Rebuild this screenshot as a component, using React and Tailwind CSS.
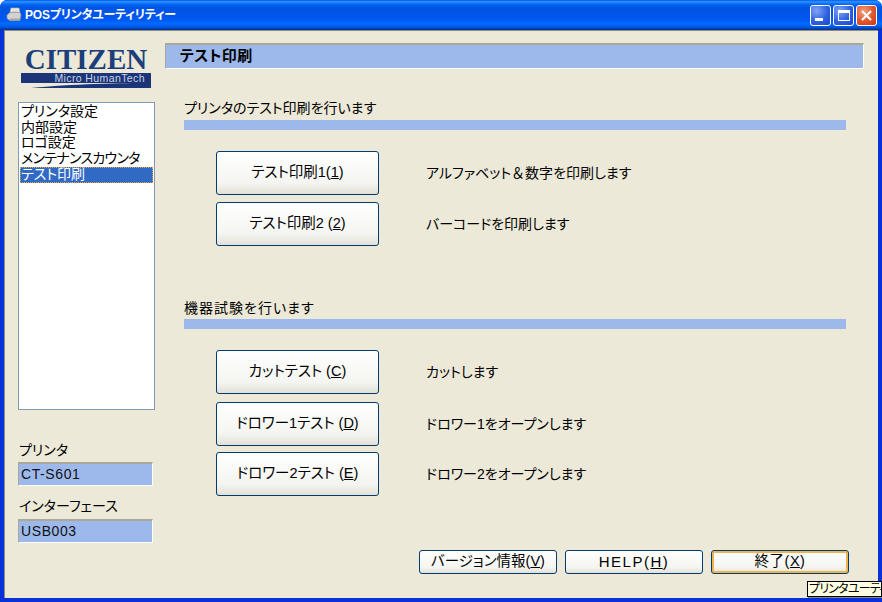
import React from 'react';

const FONT = "font-['Liberation_Sans','Noto_Sans_CJK_JP',sans-serif] [font-feature-settings:'palt']";

const menuItems = [
  { label: 'プリンタ設定', cls: '' },
  { label: '内部設定', cls: '' },
  { label: 'ロゴ設定', cls: '' },
  { label: 'メンテナンスカウンタ', cls: 'tracking-[-0.7px]' },
  { label: 'テスト印刷', cls: 'bg-[#316ac5] text-white outline-1 -outline-offset-1 outline-dotted outline-[#e8a33d]' },
];

const PrinterIcon = () => (
  <svg width="18" height="18" viewBox="0 0 18 18" className="shrink-0">
    <path d="M6 2h8l1 5H5z" fill="#f2f2f0" stroke="#a8a8a8" strokeWidth="0.7" />
    <path d="M2 9l3-2.5h10l1 2-1 6H5l-3-2z" fill="#d2d2d0" stroke="#8f8f8f" strokeWidth="0.7" />
    <path d="M5 12.5h10l-.4 2.3H5z" fill="#a5a5a5" />
    <path d="M7 4h6M7 5.4h6" stroke="#c4c4c4" strokeWidth="0.7" />
  </svg>
);

const CaptionButton = ({ close, children }) => (
  <div
    className={`w-[21px] h-[21px] rounded-[3px] border border-white flex items-center justify-center ${
      close
        ? 'bg-[radial-gradient(circle_at_35%_30%,#f0a080,#e2552b_55%,#c8380f)]'
        : 'bg-[radial-gradient(circle_at_30%_25%,#7fa4f5,#2f62e0_55%,#1c45cf)]'
    }`}
  >
    {children}
  </div>
);

const XpButton = ({ className = '', children }) => (
  <button
    className={`flex items-center justify-center rounded-[3px] border border-[#003c74] bg-[linear-gradient(180deg,#ffffff,#f4f4f0_75%,#e3e0d6)] text-[14.5px] text-black ${className}`}
  >
    {children}
  </button>
);

const TestRow = ({ label, desc, className = '' }) => (
  <div className={`flex items-center ${className}`}>
    <XpButton className="ml-[51px] w-[163px] h-[44px]">{label}</XpButton>
    <span className="ml-[47px] text-[14px] text-black">{desc}</span>
  </div>
);

const InfoField = ({ children }) => (
  <div className="w-[135px] h-[24px] flex items-center pl-[2px] bg-[#9db9eb] border-t-2 border-l border-t-[#aca899] border-l-[#aca899] border-b border-r border-b-white border-r-white text-[14px] tracking-[0.6px] text-[#111]">
    {children}
  </div>
);

const Logo = () => (
  <div className="ml-[3px] w-[130px] flex flex-col">
    <div className="h-[26px] flex items-center justify-center font-['Liberation_Serif',serif] font-bold text-[29px] leading-none text-[#1c3f7c]">
      CITIZEN
    </div>
    <div className="mt-[1px] h-[10px] bg-[#1c3578] flex items-center justify-end pr-[6px] text-[10.5px] leading-none tracking-[0.4px] text-[#c9d3e6]">
      Micro HumanTech
    </div>
    <svg width="130" height="5" viewBox="0 0 130 5" className="block">
      <path d="M10 5C50 1 100 0 130 0v5z" fill="#1c3578" />
    </svg>
  </div>
);

export default function App() {
  return (
    <div className={`${FONT} relative w-[882px] h-[602px] overflow-hidden flex flex-col bg-[#0831d9] rounded-t-[7px]`}>
      {/* タイトルバー */}
      <div className="h-[30px] shrink-0 flex items-center pl-[5px] pr-[5px] rounded-t-[7px] bg-[linear-gradient(180deg,#0058ee_0%,#3593ff_6%,#127dff_10%,#0262ee_16%,#0054e3_26%,#0055eb_56%,#005bf5_68%,#026afe_78%,#0062ef_86%,#0052d6_92%,#0040ab_96%,#003092_100%)]">
        <PrinterIcon />
        <span className="ml-[2px] text-[12px] font-bold tracking-[-0.2px] text-white">POSプリンタユーティリティー</span>
        <div className="ml-auto flex gap-[2px]">
          <CaptionButton>
            <div className="mt-[8px] mr-[3px] w-[8px] h-[3px] bg-white" />
          </CaptionButton>
          <CaptionButton>
            <div className="w-[12px] h-[11px] border border-white border-t-[3px]" />
          </CaptionButton>
          <CaptionButton close>
            <svg width="13" height="13" viewBox="0 0 13 13">
              <path d="M2 2l9 9M11 2l-9 9" stroke="#fff" strokeWidth="2.2" />
            </svg>
          </CaptionButton>
        </div>
      </div>

      {/* クライアント領域 */}
      <div className="flex-1 mx-[4px] mb-[4px] flex bg-[#ece9d8] border-t border-l border-[#8f8d80]">
        {/* 左カラム */}
        <div className="w-[160px] shrink-0 pl-[13px] pt-[15px] flex flex-col">
          <Logo />
          <ul className="mt-[14px] w-[137px] h-[308px] bg-white border border-[#7f9db9] pt-[1px] px-[1px] text-[14px] leading-[15.7px] text-black">
            {menuItems.map((item) => (
              <li key={item.label} className={`pl-[1px] whitespace-nowrap ${item.cls}`}>
                {item.label}
              </li>
            ))}
          </ul>
          <div className="mt-[31px] h-[21px] pb-[2px] pl-[1px] flex items-center text-[14px]">プリンタ</div>
          <InfoField>CT-S601</InfoField>
          <div className="mt-[12px] h-[21px] pb-[4px] pl-[1px] flex items-center text-[14px]">インターフェース</div>
          <InfoField>USB003</InfoField>
        </div>

        {/* 右カラム */}
        <div className="flex-1 pt-[12px] flex flex-col">
          <div className="w-[699px] h-[26px] flex items-center pl-[14px] bg-[#9db9eb] border-t-2 border-l border-t-[#aca899] border-l-[#aca899] border-b border-r border-b-white border-r-white text-[15px] font-bold tracking-[0.4px] text-black">
            テスト印刷
          </div>

          <div className="mt-[30px] pl-[19px] h-[21px] text-[14px] leading-[18px]">プリンタのテスト印刷を行います</div>
          <div className="ml-[19px] w-[662px] h-[10px] bg-[#9db9eb]" />
          <TestRow
            className="mt-[21px]"
            desc={<>アルファベット<span className="[font-feature-settings:normal]">＆</span>数字を印刷します</>}
            label={<span>テスト印刷1(<u>1</u>)</span>}
          />
          <TestRow className="mt-[7px]" desc="バーコードを印刷します" label={<span>テスト印刷2 (<u>2</u>)</span>} />

          <div className="mt-[53px] pl-[19px] h-[20px] text-[14px] leading-[18px] tracking-[1px]">機器試験を行います</div>
          <div className="ml-[19px] w-[662px] h-[10px] bg-[#9db9eb]" />
          <TestRow className="mt-[21px]" desc="カットします" label={<span>カットテスト (<u>C</u>)</span>} />
          <TestRow className="mt-[8px]" desc="ドロワー1をオープンします" label={<span>ドロワー1テスト (<u>D</u>)</span>} />
          <TestRow className="mt-[6px]" desc="ドロワー2をオープンします" label={<span>ドロワー2テスト (<u>E</u>)</span>} />

          <div className="mt-[54px] pr-[29px] flex justify-end gap-[8px]">
            <XpButton className="w-[138px] h-[24px]">
              <span>バージョン情報(<u>V</u>)</span>
            </XpButton>
            <XpButton className="w-[138px] h-[24px]">
              <span className="text-[15px] tracking-[1.5px]">HELP(<u>H</u>)</span>
            </XpButton>
            <XpButton className="w-[138px] h-[24px] shadow-[inset_0_0_0_2px_#f0b44a]">
              <span className="tracking-[0.5px]">終了(<u>X</u>)</span>
            </XpButton>
          </div>
        </div>
      </div>

      {/* ツールチップ */}
      <div className="absolute left-[807px] top-[581px] w-[75px] h-[16px] pl-[1px] overflow-hidden whitespace-nowrap border border-black bg-[#ffffe1] text-[12px] leading-[14px] tracking-[-0.8px] text-black shadow-[1px_1px_0_#8a8a80]">
        プリンタユーティリティー
      </div>
    </div>
  );
}
